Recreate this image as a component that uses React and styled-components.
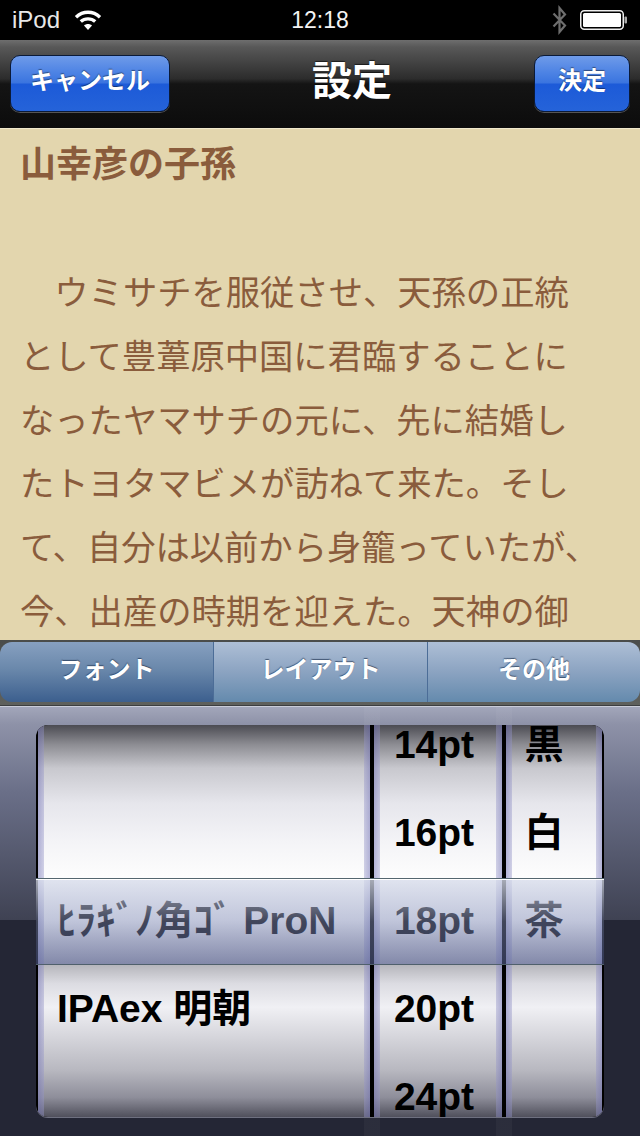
import React from "react";
import styled, { createGlobalStyle } from "styled-components";

const Global = createGlobalStyle`
  html, body { margin: 0; padding: 0; background: #000; }
`;
const CJK = `"Liberation Sans", "Noto Sans CJK JP", sans-serif`;

const Screen = styled.div`
  width: 640px; height: 1136px; overflow: hidden;
  display: flex; flex-direction: column;
  font-family: ${CJK};
`;
const StatusBar = styled.div`
  height: 40px; flex: none; background: #000; color: #fff;
  display: grid; grid-template-columns: 1fr auto 1fr; align-items: center;
  padding: 0 12px 0 12px; box-sizing: border-box;
`;
const StatusLeft = styled.div`display: flex; align-items: center; gap: 14px; color: #e8e8e8; font-size: 24px;`;
const StatusTime = styled.div`font-size: 23px; color: #f4f4f4;`;
const StatusRight = styled.div`display: flex; align-items: center; justify-content: flex-end; gap: 13px;`;

const NavBar = styled.div`
  height: 88px; flex: none; box-sizing: border-box; padding: 15px 10px 16px;
  display: flex; justify-content: space-between; align-items: center;
  background: linear-gradient(#6e6e6e 0, #585858 8%, #2c2c2c 44%, #141414 50%, #0c0c0c 100%);
`;
const NavButton = styled.div`
  width: ${p => p.$w}px; height: 57px; box-sizing: border-box;
  border-radius: 10px;
  border: 1px solid #0a1a38;
  box-shadow: 0 1px 0 #555;
  background: linear-gradient(#6f9be9 0, #4d83e4 30%, #3a74df 49%, #1c5ad8 51%, #2563d9 100%);
  color: #fff; font-size: 24px; font-weight: 700;
  display: flex; align-items: center; justify-content: center;
  text-shadow: 0 -1px 1px rgba(0,0,0,.45);
  font-family: "Noto Sans CJK JP", sans-serif;
  padding-bottom: 10px;
`;
const NavTitle = styled.div`
  color: #fff; font-size: 40px; font-weight: 700; font-family: "Noto Sans CJK JP", sans-serif;
  text-shadow: 0 -1px 1px rgba(0,0,0,.6);
  padding-bottom: 12px;
`;

const Reader = styled.div`
  height: 512px; flex: none; box-sizing: border-box; overflow: hidden;
  background: #e3d6ae; color: #8a5c3c; padding: 10px 20px 0;
  border-top: 1px solid #f0e8cc;
  font-family: "Noto Sans CJK JP", sans-serif;
`;
const ChapterTitle = styled.div`
  font-size: 36px; font-weight: 700; line-height: 44px; height: 120px;
`;
const Line = styled.div`
  font-size: 34.3px; line-height: 63.8px; white-space: nowrap; height: 63.8px;
`;

const SegmentBar = styled.div`
  height: 66px; flex: none; box-sizing: border-box; padding: 2px 0 4px;
  background: linear-gradient(#4a4c4a, #5e605c);
  border-bottom: 1px solid #3c3e40;
`;
const Segments = styled.div`
  height: 60px; display: grid; grid-template-columns: 213px 1fr 213px;
  border-radius: 12px; overflow: hidden;
`;
const Segment = styled.div`
  display: flex; align-items: center; justify-content: center;
  font-size: 24px; font-weight: 700; color: #fff; padding-bottom: 10px;
  font-family: "Noto Sans CJK JP", sans-serif;
  text-shadow: 0 -1px 1px rgba(30,50,80,.7);
  background: ${p => p.$on
    ? "linear-gradient(#87a0c0, #6a88ab 45%, #3c5f8e)"
    : "linear-gradient(#aebfd6, #8ba3c1 50%, #648aad)"};
  border-left: ${p => p.$div ? "1px solid #4c6d97" : "none"};
`;

const Picker = styled.div`
  flex: 1; box-sizing: border-box; padding: 18px 36px 20px;
  border-top: 1px solid #c9ccd8;
  background:
    linear-gradient(90deg, transparent 364px, rgba(255,255,255,.035) 364px, rgba(255,255,255,.035) 380px, transparent 380px, transparent 496px, rgba(255,255,255,.035) 496px, rgba(255,255,255,.035) 512px, transparent 512px),
    linear-gradient(#a2a6ba 0, #8e92a8 8%, #6a6f88 40%, #3f4253 100%) 0 0 / 100% 213px no-repeat,
    #242635;
`;
const Frame = styled.div`
  position: relative; height: 392px; display: flex; gap: 4px;
  background: #000; overflow: hidden;
  border-radius: 12px; padding-left: 2px; padding-right: 2px; box-sizing: border-box;
  box-shadow: 0 1px 0 #6e7080;
`;
const Wheel = styled.div`
  width: ${p => p.$w}px; flex: none; overflow: hidden; box-sizing: border-box;
  padding: 0 ${p => p.$inset}px 0 ${p => p.$left}px;
  background:
    linear-gradient(90deg, rgba(120,120,185,.55) 0, rgba(150,150,200,.42) 6px, transparent 6px, transparent calc(100% - 6px), rgba(150,150,200,.42) calc(100% - 6px), rgba(120,120,185,.55) 100%),
    linear-gradient(#4b4b52 0, #8d8d93 5%, #c8c8ce 11%, #e6e6ec 20%, #f4f4f7 30%, #fdfdfd 39%, #fff 50%, #b4b4ba 61%, #dcdce2 66%, #f0f0f4 72%, #d4d4da 80%, #b8b8c0 88%, #8e8e9a 95%, #50505c 100%);
`;
const Reel = styled.div`margin-top: -24px;`;
const WheelRow = styled.div`
  height: 88px; line-height: 88px; white-space: nowrap;
  font-size: 39px; font-weight: 700; color: #000;
  text-align: ${p => p.$left ? "left" : "center"};
  font-family: "Liberation Sans", "Noto Sans CJK JP", sans-serif;
`;
const Band = styled.div`
  position: absolute; left: 0; right: 0; top: 153px; height: 87px; box-sizing: border-box;
  border-top: 1px solid #54666f;
  border-bottom: 1px solid #50606c;
  box-shadow: inset 0 1px 0 #fff;
  background: linear-gradient(rgba(216,221,236,.78), rgba(129,139,181,.5) 50%, rgba(91,102,156,.55));
`;

const Wifi = () => (
  <svg width="28" height="22" viewBox="0 0 28 22" fill="none" stroke="#fff" strokeWidth="3.4">
    <path d="M2 8.2C9 1.6 19 1.6 26 8.2" />
    <path d="M6.8 12.6C10.8 9 17.2 9 21.2 12.6" />
    <path d="M14 21l-4-4.4c2.2-2 5.8-2 8 0z" fill="#fff" stroke="none" />
  </svg>
);
const Bluetooth = () => (
  <svg width="15" height="30" viewBox="0 0 15 30" fill="none" stroke="#6e6e6e" strokeWidth="2.2">
    <path d="M1.5 8.5L13 20.5 7.5 27V3L13 9.5 1.5 21.5" />
  </svg>
);
const Battery = () => (
  <svg width="48" height="20" viewBox="0 0 48 20">
    <rect x="0.75" y="0.75" width="42.5" height="18.5" rx="3.5" fill="none" stroke="#eee" strokeWidth="1.5" />
    <rect x="3" y="3" width="38" height="14" rx="1.5" fill="#fff" />
    <rect x="44.5" y="6.5" width="2.5" height="7" rx="1" fill="#aaa" />
  </svg>
);

const lines = [
  "　ウミサチを服従させ、天孫の正統",
  "として豊葦原中国に君臨することに",
  "なったヤマサチの元に、先に結婚し",
  "たトヨタマビメが訪ねて来た。そし",
  "て、自分は以前から身籠っていたが、",
  "今、出産の時期を迎えた。天神の御",
];
const fonts = ["", "", "ﾋﾗｷﾞﾉ角ｺﾞ ProN", "IPAex 明朝", ""];
const sizes = ["14pt", "16pt", "18pt", "20pt", "24pt"];
const colors = ["黒", "白", "茶", "", ""];

function Column({ items, w, inset, left, alignLeft }) {
  return (
    <Wheel $w={w} $inset={inset} $left={left}>
      <Reel>
        {items.map((t, i) => <WheelRow key={i} $left={alignLeft}>{t}</WheelRow>)}
      </Reel>
    </Wheel>
  );
}

export default function App() {
  return (
    <Screen>
      <Global />
      <StatusBar>
        <StatusLeft>iPod<Wifi /></StatusLeft>
        <StatusTime>12:18</StatusTime>
        <StatusRight><Bluetooth /><Battery /></StatusRight>
      </StatusBar>
      <NavBar>
        <NavButton $w={160}>キャンセル</NavButton>
        <NavTitle>設定</NavTitle>
        <NavButton $w={96}>決定</NavButton>
      </NavBar>
      <Reader>
        <ChapterTitle>山幸彦の子孫</ChapterTitle>
        {lines.map(l => <Line key={l}>{l}</Line>)}
      </Reader>
      <SegmentBar>
        <Segments>
          <Segment $on>フォント</Segment>
          <Segment $div>レイアウト</Segment>
          <Segment $div>その他</Segment>
        </Segments>
      </SegmentBar>
      <Picker>
        <Frame>
          <Column items={fonts} w={332} inset={0} left={19} alignLeft />
          <Column items={sizes} w={128} inset={8} left={0} />
          <Column items={colors} w={96} inset={20} left={0} />
          <Band />
        </Frame>
      </Picker>
    </Screen>
  );
}
